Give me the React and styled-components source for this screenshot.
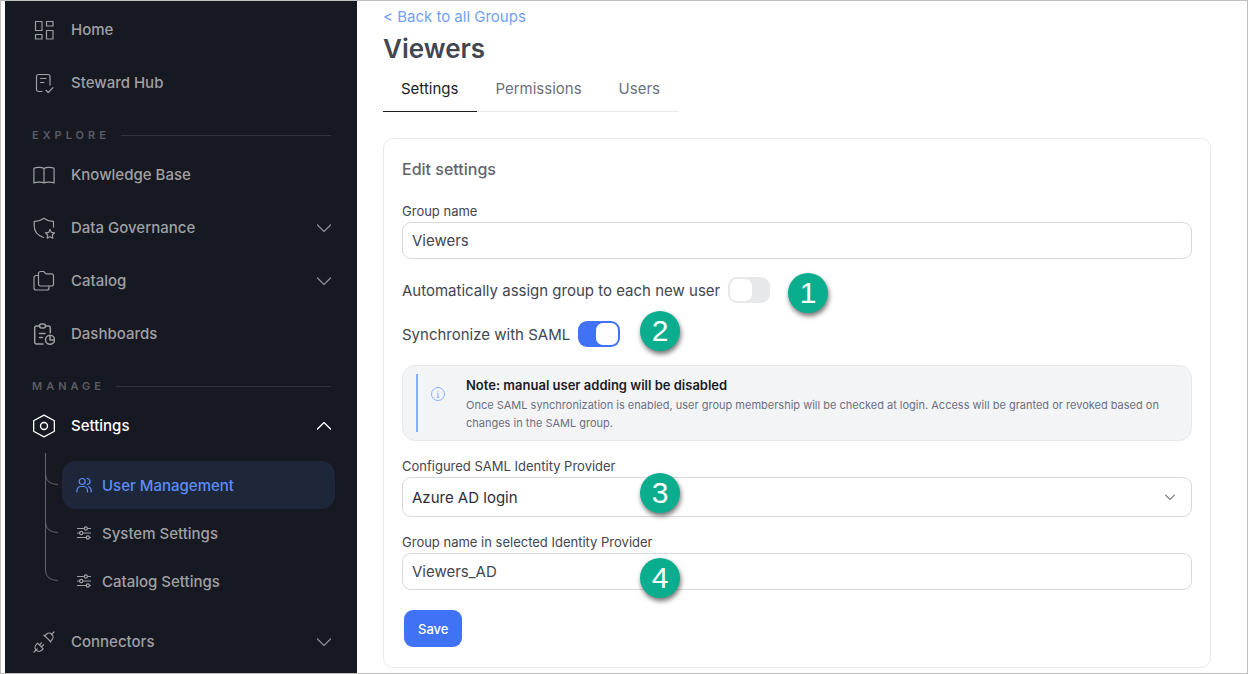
import React, { useState } from "react";
import styled, { createGlobalStyle, css } from "styled-components";

const HomeIcon = () => (
  <IconSvg viewBox="0 0 22 22">
    <rect x="2.5" y="2.5" width="6.5" height="9" />
    <rect x="13.5" y="2.5" width="6.5" height="4.5" />
    <rect x="2.5" y="15.5" width="6.5" height="4.5" />
    <rect x="13.5" y="11.5" width="6.5" height="8.5" />
  </IconSvg>
);

const StewardIcon = () => (
  <IconSvg viewBox="0 0 22 22">
    <path d="M9 19.5H5.5a2 2 0 0 1-2-2v-13a2 2 0 0 1 2-2h9.5a2 2 0 0 1 2 2V13" />
    <path d="M7.5 6.5h5.5M7.5 10.5h3.5M13 18.3l2.3 2.2 4.7-4.8" />
  </IconSvg>
);

const BookIcon = () => (
  <IconSvg viewBox="0 0 22 22">
    <path d="M11 4.500C9 3 3.500 3 .9 4.300V19c2.600-1.200 8.100-1.200 10.100 0 2-1.200 7.500-1.200 10.100 0V4.300C18.500 3 13 3 11 4.500zM11 4.500V19" />
  </IconSvg>
);

const ShieldIcon = () => (
  <IconSvg viewBox="0 0 22 22">
    <path d="M20.500 10V4.300c-3.500.2-6.500-.6-9.600-3C7.800 3.700 4.700 4.500 1.200 4.300v4.500c0 5.400 3.600 9.700 9.300 11.700" />
    <path d="M17 12.500l1.400 2.900 3.200.4-2.300 2.200.6 3.200-2.900-1.500-2.900 1.500.6-3.200-2.300-2.200 3.200-.4z" />
  </IconSvg>
);

const FoldersIcon = () => (
  <IconSvg viewBox="0 0 22 22">
    <path d="M5.500 3.500a2 2 0 0 1 2-2h3.200l2.300 2.300h5.500a2 2 0 0 1 2 2V14a2 2 0 0 1-2 2h-11a2 2 0 0 1-2-2z" />
    <path d="M5.500 5.500H3a2 2 0 0 0-2 2V18a2 2 0 0 0 2 2h11a2 2 0 0 0 2-2v-2" />
  </IconSvg>
);

const DashboardIcon = () => (
  <IconSvg viewBox="0 0 22 22" $stroke={1.5}>
    <path d="M6.500 3H3.500a1.800 1.800 0 0 0-1.800 1.800v14.400A1.800 1.800 0 0 0 3.500 21H10M12.500 3h3a1.800 1.800 0 0 1 1.800 1.800v5" />
    <rect x="6.500" y="1" width="6" height="4" rx="2" />
    <path d="M6.500 10.500h5.500M6.500 14.500h3" />
    <circle cx="17" cy="16.800" r="4.500" />
    <path d="M17 12.500v4.500h4.300" />
  </IconSvg>
);

const HexIcon = () => (
  <IconSvg viewBox="0 0 22 24" $stroke={1.4}>
    <path d="M11 1.200l10 5.300a1 1 0 0 1 .4.800v9.400a1 1 0 0 1-.4.800L11 22.800 1 17.500a1 1 0 0 1-.4-.8V7.300a1 1 0 0 1 .4-.8z" />
    <circle cx="11" cy="12" r="3.500" />
  </IconSvg>
);

const PlugIcon = () => (
  <IconSvg viewBox="0 0 22 22">
    <path d="M1 21l3.200-3.200M4.600 12.200l5.600 5.600-1.500 1.400a3.500 3.500 0 0 1-5.500-5.500zM6.500 14l2-2.200M8.500 15.700l2.200-2" />
    <path d="M21 1l-2.700 2.700M11.800 4.800l5.600 5.600 1.500-1.600a3.600 3.600 0 0 0-5.400-5.500zM13 6l-.5-.5M10.800 4.200l1.200 1.200M16.800 10l1 1" />
  </IconSvg>
);

const UsersIcon = () => (
  <IconSvg viewBox="0 0 16 16" $small>
    <circle cx="6.200" cy="4.500" r="3" />
    <path d="M1 15v-1.500a4 4 0 0 1 4-4h2.500a4 4 0 0 1 4 4V15M11 1.500a3 3 0 0 1 0 6M12.700 9.800a4 4 0 0 1 2.500 3.700V15" />
  </IconSvg>
);

const SlidersIcon = () => (
  <IconSvg viewBox="0 0 16 16" $small>
    <path d="M1.500 3.500H8M11.500 3.500h3M1.500 8h2M7 8h7.500M1.500 12.500H10M13.500 12.500h1" />
    <circle cx="9.800" cy="3.500" r="1.600" />
    <circle cx="5.200" cy="8" r="1.600" />
    <circle cx="11.800" cy="12.500" r="1.600" />
  </IconSvg>
);

const Chevron = ({ up }) => (
  <ChevronSvg viewBox="0 0 14 8" $up={up}>
    <path d={up ? "M0 7.500l7-7 7 7" : "M0 .5l7 7 7-7"} />
  </ChevronSvg>
);

const explore = [
  { name: "Knowledge Base", icon: <BookIcon /> },
  { name: "Data Governance", icon: <ShieldIcon />, more: true },
  { name: "Catalog", icon: <FoldersIcon />, more: true },
  { name: "Dashboards", icon: <DashboardIcon /> },
];

const subItems = [
  { name: "User Management", icon: <UsersIcon />, active: true },
  { name: "System Settings", icon: <SlidersIcon /> },
  { name: "Catalog Settings", icon: <SlidersIcon /> },
];

const NavItem = ({ name, icon, more, open }) => (
  <NavLink href="#" $active={open}>
    {icon}
    <NavText>{name}</NavText>
    {(more || open) && <Chevron up={open} />}
  </NavLink>
);

export default function App() {
  const [groupName, setGroupName] = useState("Viewers");
  const [autoAssign, setAutoAssign] = useState(false);
  const [saml, setSaml] = useState(true);
  const [samlGroup, setSamlGroup] = useState("Viewers_AD");

  return (
    <Page>
      <GlobalStyle />
      <Sidebar>
        <NavItem name="Home" icon={<HomeIcon />} />
        <NavItem name="Steward Hub" icon={<StewardIcon />} />
        <NavSection>Explore</NavSection>
        {explore.map((item) => (
          <NavItem key={item.name} {...item} />
        ))}
        <NavSection>Manage</NavSection>
        <NavItem name="Settings" icon={<HexIcon />} open />
        <SubNav>
          <TreeSvg viewBox="0 0 17 153">
            <path d="M4.500 1v117q0 10.500 13 10.500M4.500 22q0 10.500 13 10.500M4.500 70q0 10.500 13 10.500" />
          </TreeSvg>
          <SubList>
            {subItems.map((item) => (
              <SubLink href="#" key={item.name} $active={item.active}>
                {item.icon}
                {item.name}
              </SubLink>
            ))}
          </SubList>
        </SubNav>
        <NavItem name="Connectors" icon={<PlugIcon />} more />
      </Sidebar>

      <Main>
        <BackLink href="#">&lt; Back to all Groups</BackLink>
        <PageTitle>Viewers</PageTitle>
        <Tabs>
          <Tab $active>Settings</Tab>
          <Tab>Permissions</Tab>
          <Tab>Users</Tab>
        </Tabs>

        <Card>
          <CardTitle>Edit settings</CardTitle>
          <Field>
            <Label htmlFor="group-name">Group name</Label>
            <TextInput
              id="group-name"
              value={groupName}
              onChange={(e) => setGroupName(e.target.value)}
            />
          </Field>
          <ToggleRow>
            <label htmlFor="auto-assign">
              Automatically assign group to each new user
            </label>
            <Toggle
              id="auto-assign"
              type="checkbox"
              checked={autoAssign}
              onChange={(e) => setAutoAssign(e.target.checked)}
            />
            <Badge $left={386} $top={-4}>1</Badge>
          </ToggleRow>
          <ToggleRow>
            <label htmlFor="saml">Synchronize with SAML</label>
            <Toggle
              id="saml"
              type="checkbox"
              checked={saml}
              onChange={(e) => setSaml(e.target.checked)}
            />
            <Badge $left={238} $top={-10}>2</Badge>
          </ToggleRow>
          <Note>
            <NoteBar />
            <InfoSvg viewBox="0 0 16 16">
              <circle cx="8" cy="8" r="6.500" />
              <path d="M7 7.200h1v4M6.700 11.300h2.600M8 4.500v1" />
            </InfoSvg>
            <div>
              <NoteTitle>Note: manual user adding will be disabled</NoteTitle>
              <NoteText>
                Once SAML synchronization is enabled, user group membership will
                be checked at login. Access will be granted or revoked based on
                changes in the SAML group.
              </NoteText>
            </div>
          </Note>
          <Field>
            <Label htmlFor="provider">Configured SAML Identity Provider</Label>
            <SelectBox>
              <Select id="provider">
                <option>Azure AD login</option>
              </Select>
              <SelectArrow viewBox="0 0 10 6">
                <path d="M0 .5l5 5 5-5" />
              </SelectArrow>
            </SelectBox>
            <Badge $left={238} $top={14}>3</Badge>
          </Field>
          <Field>
            <Label htmlFor="saml-group">
              Group name in selected Identity Provider
            </Label>
            <TextInput
              id="saml-group"
              value={samlGroup}
              onChange={(e) => setSamlGroup(e.target.value)}
            />
            <Badge $left={238} $top={23}>4</Badge>
          </Field>
          <SaveButton type="button">Save</SaveButton>
        </Card>
      </Main>
    </Page>
  );
}

const GlobalStyle = createGlobalStyle`
  * {
    box-sizing: border-box;
  }
  body {
    margin: 0;
    background: #fff;
    color: #414651;
    font-family: Inter, "Liberation Sans", sans-serif;
    font-size: 15px;
  }
  input, select, button {
    font: inherit;
    color: inherit;
  }
  a {
    text-decoration: none;
  }
`;

const Page = styled.div`
  display: flex;
  min-height: 100vh;
  padding-left: 4px;
  border: 1px solid #bfbfbf;
`;

const Sidebar = styled.nav`
  flex: none;
  width: 352px;
  padding: 2px 22px 5px 28px;
  background: #161822;
`;

const NavLink = styled.a`
  display: flex;
  align-items: center;
  gap: 16px;
  height: 53px;
  padding-right: 4px;
  color: ${(props) => (props.$active ? "#fff" : "#a0a0a3")};
  font-weight: 500;
`;

const NavText = styled.span`
  flex: 1;
`;

const IconSvg = styled.svg`
  flex: none;
  width: ${(props) => (props.$small ? 16 : 22)}px;
  fill: none;
  stroke: currentColor;
  stroke-width: ${(props) => props.$stroke || 1.2};
  stroke-linecap: round;
  stroke-linejoin: round;
`;

const ChevronSvg = styled.svg`
  width: 14px;
  fill: none;
  stroke: ${(props) => (props.$up ? "#fff" : "#8a8b90")};
  stroke-width: 1.3;
`;

const NavSection = styled.div`
  display: flex;
  align-items: center;
  gap: 11px;
  height: 26px;
  margin: 13px 4px 0 -1px;
  color: #5a5c66;
  font-size: 11px;
  font-weight: 600;
  letter-spacing: 4px;
  text-transform: uppercase;

  &::after {
    content: "";
    flex: 1;
    height: 1px;
    background: #30323c;
  }
`;

const SubNav = styled.div`
  display: flex;
  gap: 4px;
  padding-left: 8px;
`;

const TreeSvg = styled.svg`
  flex: none;
  width: 17px;
  height: 153px;
  fill: none;
  stroke: #62646c;
`;

const SubList = styled.div`
  flex: 1;
  padding: 9px 0 10px;
`;

const SubLink = styled.a`
  display: flex;
  align-items: center;
  gap: 10px;
  height: 48px;
  padding-left: 14px;
  border-radius: 14px;
  color: #a0a0a3;
  font-weight: 500;

  ${(props) =>
    props.$active &&
    css`
      background: #1e273a;
      color: #5b8df8;
    `}
`;

const Main = styled.main`
  flex: 1;
  min-width: 0;
  padding: 6px 36px 5px 26px;
`;

const BackLink = styled.a`
  display: block;
  color: #70a1f5;
  line-height: 20px;
`;

const PageTitle = styled.h1`
  margin: 4px 0 0;
  font-size: 26px;
  font-weight: 600;
  line-height: 35px;
`;

const Tabs = styled.div`
  display: inline-flex;
  border-bottom: 1px solid #e9eaeb;
`;

const Tab = styled.button`
  height: 46px;
  margin-bottom: -1px;
  padding: 0 19px 0 18px;
  border: none;
  border-bottom: 1px solid ${(props) => (props.$active ? "#181d27" : "transparent")};
  background: none;
  color: ${(props) => (props.$active ? "#181d27" : "#6b7080")};
`;

const Card = styled.section`
  display: flex;
  flex-direction: column;
  gap: 18px;
  margin-top: 26px;
  padding: 18px;
  border: 1px solid #e9eaeb;
  border-radius: 10px;
`;

const CardTitle = styled.h2`
  margin: 0 0 5px;
  color: #61656f;
  font-size: 16px;
  font-weight: 500;
  line-height: 24px;
`;

const Field = styled.div`
  position: relative;
  display: flex;
  flex-direction: column;
  gap: 4px;
`;

const Label = styled.label`
  font-size: 13px;
  line-height: 14px;
`;

const boxStyle = css`
  width: 100%;
  padding: 0 9px;
  border: 1px solid #d8d9dc;
  border-radius: 9px;
  background: #fff;
`;

const TextInput = styled.input`
  ${boxStyle}
  height: 37px;
`;

const SelectBox = styled.div`
  display: grid;
  align-items: center;
`;

const Select = styled.select`
  ${boxStyle}
  grid-area: 1 / 1;
  height: 40px;
  appearance: none;
  color: #2b2f38;
`;

const SelectArrow = styled.svg`
  grid-area: 1 / 1;
  justify-self: end;
  width: 10px;
  margin-right: 17px;
  fill: none;
  stroke: #333;
  pointer-events: none;
`;

const ToggleRow = styled.div`
  position: relative;
  display: flex;
  align-items: center;
  gap: 8px;
  height: 26px;
`;

const Toggle = styled.input`
  appearance: none;
  display: flex;
  justify-content: ${(props) => (props.checked ? "flex-end" : "flex-start")};
  width: 42px;
  height: 26px;
  margin: 0;
  padding: 2px;
  border-radius: 9px;
  background: ${(props) => (props.checked ? "#4072f5" : "#e7e8ea")};

  &::before {
    content: "";
    width: 22px;
    height: 22px;
    border-radius: 7px;
    background: #fff;
  }
`;

const Badge = styled.span`
  position: absolute;
  left: ${(props) => props.$left}px;
  top: ${(props) => props.$top}px;
  width: 40px;
  height: 40px;
  border-radius: 50%;
  background: #0aae8e;
  box-shadow: 1px 3px 5px rgba(0, 0, 0, 0.55);
  color: #fff;
  font-family: "Liberation Sans", sans-serif;
  font-size: 30px;
  line-height: 40px;
  text-align: center;
`;

const Note = styled.div`
  display: flex;
  padding: 8px 24px 8px 13px;
  border: 1px solid #e6e8eb;
  border-radius: 13px;
  background: #f3f4f6;
`;

const NoteBar = styled.div`
  flex: none;
  width: 2px;
  background: #84adff;
`;

const InfoSvg = styled.svg`
  flex: none;
  width: 16px;
  height: 16px;
  margin: 12px 20px 0 12px;
  fill: none;
  stroke: #84b0ff;
`;

const NoteTitle = styled.div`
  color: #181d27;
  font-size: 13px;
  font-weight: 600;
  line-height: 22px;
`;

const NoteText = styled.div`
  color: #6b7080;
  font-size: 11px;
  line-height: 18px;
`;

const SaveButton = styled.button`
  align-self: flex-start;
  height: 37px;
  margin: 2px;
  padding: 0 14px;
  border: none;
  border-radius: 9px;
  background: #4072f5;
  color: #fff;
  font-size: 13px;
  font-weight: 500;
`;
